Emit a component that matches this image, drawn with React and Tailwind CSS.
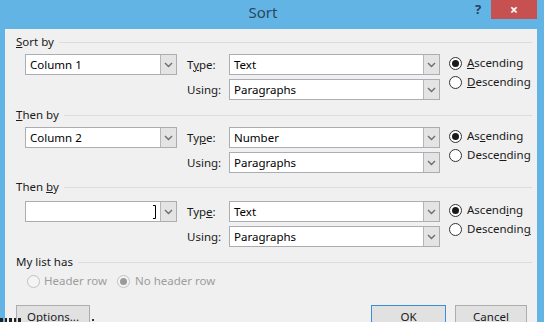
import React from "react";

const Chevron = () => (
  <svg width="9" height="6" viewBox="0 0 9 6">
    <path d="M1 1 L4.5 4.5 L8 1" fill="none" stroke="#6d6d6d" strokeWidth="1.4" />
  </svg>
);

function Combo({ className, text, cursor }) {
  return (
    <div className={`flex h-[21px] border border-[#abadb3] bg-white ${className}`}>
      <div className="flex flex-1 items-center pl-[4px] text-[11.5px] leading-none text-black">
        {text}
        {cursor && (
          <div className="ml-auto mr-[3px] flex h-[14px] items-stretch">
            <svg width="4" height="14" viewBox="0 0 4 14">
              <path d="M0 0.5 H2.5 V13.5 H0" fill="none" stroke="#000" strokeWidth="1" />
            </svg>
          </div>
        )}
      </div>
      <div className="flex w-[16px] items-center justify-center border-l border-[#b6b6b6] bg-[#e4e4e4]">
        <Chevron />
      </div>
    </div>
  );
}

function Radio({ checked, disabled }) {
  return (
    <span
      className={`flex h-[13px] w-[13px] shrink-0 items-center justify-center rounded-full border ${
        disabled ? "border-[#c2c2c2] bg-[#f4f4f4]" : "border-[#333333] bg-white"
      }`}
    >
      {checked && (
        <span className={`h-[7px] w-[7px] rounded-full ${disabled ? "bg-[#9a9a9a]" : "bg-[#1a1a1a]"}`} />
      )}
    </span>
  );
}

function Heading({ children, className }) {
  return (
    <div className={`flex h-[16px] items-center pl-[11px] pr-[5px] ${className || ""}`}>
      <span className="text-[11.5px] leading-none">{children}</span>
      <div className="ml-[5px] h-px flex-1 bg-[#dcdcdc]" />
    </div>
  );
}

function Section({ h, mt, heading, col, cursor, type, typeLabel, asc, desc }) {
  return (
    <div className={h}>
      <Heading>{heading}</Heading>
      <div className={`flex ${mt}`}>
        <Combo className="ml-[20px] w-[152px]" text={col} cursor={cursor} />
        <div className="ml-[10px] flex flex-col gap-[4px]">
          <div className="flex h-[21px] items-center">
            <span className="w-[42px] text-[11.5px] leading-none">{typeLabel}</span>
            <Combo className="w-[211px]" text={type} />
          </div>
          <div className="flex h-[21px] items-center">
            <span className="w-[42px] text-[11.5px] leading-none">Using:</span>
            <Combo className="w-[211px]" text="Paragraphs" />
          </div>
        </div>
        <div className="ml-[9px] flex flex-col gap-[1px]">
          <div className="flex h-[18px] items-center gap-[5px]">
            <Radio checked />
            <span className="text-[11.5px] leading-none">{asc}</span>
          </div>
          <div className="flex h-[18px] items-center gap-[5px]">
            <Radio />
            <span className="text-[11.5px] leading-none">{desc}</span>
          </div>
        </div>
      </div>
    </div>
  );
}

export default function App() {
  return (
    <div className="relative flex h-[322px] w-[544px] flex-col overflow-hidden bg-[#62b4e4] font-['Noto_Sans',sans-serif] text-[#1a1a1a]">
      {/* title bar */}
      <div className="flex h-[29px] shrink-0 items-start">
        <div className="flex h-[24px] flex-1 items-center justify-center pl-[54px] text-[15px] text-[#2a4763]">
          Sort
        </div>
        <div className="flex h-[20px] w-[19px] items-center pl-[3px] text-[13px] font-bold text-[#23405e]">?</div>
        <div className="mr-[7px] flex h-[19px] w-[46px] items-center justify-center bg-[#c75050] text-[14px] font-bold leading-none text-white">
          ×
        </div>
      </div>

      {/* body */}
      <div className="ml-[5px] flex w-[532px] flex-1 flex-col bg-[#f0f0f0] pt-[5px]">
        <Section
          h="h-[73px]"
          mt="mt-[4px]"
          heading={<><u>S</u>ort by</>}
          col="Column 1"
          typeLabel={<>T<u>y</u>pe:</>}
          type="Text"
          asc={<><u>A</u>scending</>}
          desc={<><u>D</u>escending</>}
        />
        <Section
          h="h-[72px]"
          mt="mt-[4px]"
          heading={<><u>T</u>hen by</>}
          col="Column 2"
          typeLabel={<>Ty<u>p</u>e:</>}
          type="Number"
          asc={<>As<u>c</u>ending</>}
          desc={<>Desce<u>n</u>ding</>}
        />
        <Section
          h="h-[75px]"
          mt="mt-[6px]"
          heading={<>Then <u>b</u>y</>}
          col=""
          cursor
          typeLabel={<>Typ<u>e</u>:</>}
          type="Text"
          asc={<>Ascend<u>i</u>ng</>}
          desc={<>Descendin<u>g</u></>}
        />
        <Heading>My list has</Heading>
        <div className="ml-[22px] mt-[3px] flex h-[16px] items-center text-[11.5px] leading-none text-[#9d9d9d]">
          <Radio disabled />
          <span className="ml-[4px]">Header row</span>
          <span className="ml-[10px]">
            <Radio checked disabled />
          </span>
          <span className="ml-[5px]">No header row</span>
        </div>
        <div className="mt-[16px] flex items-start">
          <div className="ml-[11px] flex h-[24px] w-[74px] items-center justify-center border border-[#adadad] bg-[#e1e1e1] text-[11.5px] leading-none">
            <span><u>O</u>ptions...</span>
          </div>
          <div className="ml-auto flex h-[24px] w-[75px] items-center justify-center border border-[#3c8fd6] bg-[#e1e1e1] text-[11.5px] leading-none">
            OK
          </div>
          <div className="ml-[9px] mr-[10px] flex h-[24px] w-[72px] items-center justify-center border border-[#adadad] bg-[#e1e1e1] text-[11.5px] leading-none">
            Cancel
          </div>
        </div>
      </div>

      {/* stray marks at bottom edge */}
      <div className="absolute bottom-0 left-0 flex h-[4px] gap-[2px]">
        <span className="w-[3px] bg-[#222]" />
        <span className="w-[2px] bg-[#222]" />
        <span className="w-[3px] bg-[#222]" />
        <span className="w-[2px] bg-[#222]" />
        <span className="w-[3px] bg-[#222]" />
      </div>
      <span className="absolute bottom-[1px] left-[92px] h-[2px] w-[2px] bg-[#333]" />
    </div>
  );
}
